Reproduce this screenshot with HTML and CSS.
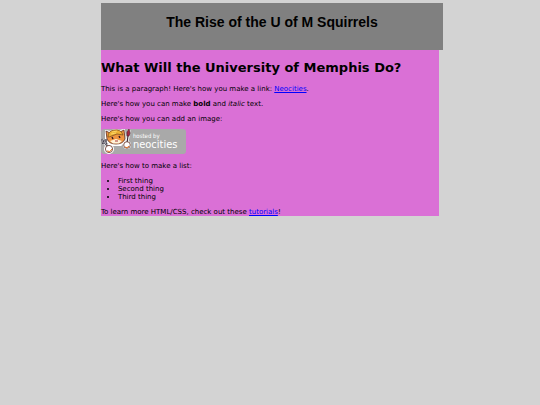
FILE: index.html
```html
<!DOCTYPE html>
<html lang="en">
<head>
    <meta charset="UTF-8">
    <meta name="viewport" content="width=device-width, initial-scale=1.0">
    <title>The Rise of the U of M Squirrels</title>
    <link rel="stylesheet" href="styles.css">
</head>
<body>
    <div class="page">
        <header class="header">The Rise of the U of M Squirrels</header>

        <main class="content">
            <h1>What Will the University of Memphis Do?</h1>

            <p>This is a paragraph! Here's how you make a link: <a href="#neocities">Neocities</a>.</p>

            <p>Here's how you can make <strong>bold</strong> and <em>italic</em> text.</p>

            <p class="caption">Here's how you can add an image:</p>

            <a class="badge" href="#neocities" aria-label="Hosted by Neocities">
                <svg class="cat" viewBox="0 0 31 25" aria-hidden="true">
                    <!-- white outline -->
                    <g fill="#fff" stroke="#fff" stroke-width="2" stroke-linejoin="round" stroke-linecap="round">
                        <path d="M5 2 L9 3 L14 1 L19 2 L23 1 L24 11 L20 16 L10 16 L5 11Z"/>
                        <path d="M28 2 L26 13 M2 12 L7 18" fill="none" stroke-width="3"/>
                        <circle cx="26" cy="16" r="3"/>
                        <circle cx="8" cy="20" r="4"/>
                    </g>
                    <!-- head, ears and cap -->
                    <path d="M5 2 L9 4 L19 3 L23 1 L24 10 Q22 15 15 15 Q8 15 6 10Z" fill="#ef9440" stroke="#592b20" stroke-width=".8"/>
                    <path d="M7 8 Q7 2 13 1 Q20 0 22 6 L16 5 L8 8Z" fill="#eeb035" stroke="#80511e" stroke-width=".8"/>
                    <path d="M11 3 L16 2 M10 5 L15 4" stroke="#ffe779" stroke-width=".7" fill="none"/>
                    <path d="M9 12 L15 10 L21 12 L18 14.5 L12 14.5Z" fill="#fff2d7"/>
                    <path d="M11 8 L12 10 M18 7 L19 9" stroke="#301a24" stroke-width="1.4"/>
                    <path d="M14 12 L17 12" stroke="#a93635"/>
                    <!-- fork -->
                    <path d="M1 10 L2 14 L5 14 L5 10 M3 11 L4 14 L8 19" fill="none" stroke="#38343f" stroke-width="1.8"/>
                    <path d="M1 10 L2 14 L5 14 L5 10 M3 11 L4 14 L8 19" fill="none" stroke="#c8c8d0" stroke-width=".7"/>
                    <!-- brush -->
                    <path d="M26 14 L27 7" stroke="#3d2933" stroke-width="1.2"/>
                    <path d="M26 7 L26 3 L28 0 L29 4 L28 7Z" fill="#a52842" stroke="#5c2030" stroke-width=".7"/>
                    <!-- paws -->
                    <circle cx="26" cy="16" r="3.3" fill="#fff" stroke="#623023" stroke-width=".8"/>
                    <path d="M24 18 Q26 20 28 17" fill="none" stroke="#e57525"/>
                    <circle cx="8" cy="20" r="3.6" fill="#fff" stroke="#623023" stroke-width=".8"/>
                    <path d="M6 22 Q9 24 11 20" fill="none" stroke="#e57525"/>
                </svg>
                <span class="badge-text">
                    <span class="badge-small">hosted by</span>
                    <span class="badge-name">neocities</span>
                </span>
            </a>

            <p>Here's how to make a list:</p>

            <ul>
                <li>First thing</li>
                <li>Second thing</li>
                <li>Third thing</li>
            </ul>

            <p>To learn more HTML/CSS, check out these <a href="#tutorials">tutorials</a>!</p>
        </main>
    </div>
</body>
</html>
```

FILE: styles.css
```css
* {
    box-sizing: border-box;
}

body {
    margin: 3px 0;
    background-color: lightgray;
    color: black;
    font-family: Verdana, "DejaVu Sans", sans-serif;
    font-size: 7px;
    line-height: 8px;
}

.page {
    width: 63%;
    max-width: 800px;
    margin: 0 auto;
    padding-left: 1px;
}

.header {
    margin-right: -3px;
    padding: 11px 0 20px;
    background-color: gray;
    font-family: Arial, "Liberation Sans", sans-serif;
    font-size: 14px;
    font-weight: bold;
    line-height: 16px;
    text-align: center;
}

.content {
    display: flow-root;
    margin-right: 1px;
    background-color: orchid;
}

h1 {
    margin: 9px 0;
    font-size: 13px;
    line-height: 17px;
}

p {
    margin: 7px 0;
}

.content > :last-child {
    margin-bottom: 0;
}

a {
    color: blue;
}

ul {
    margin: 7px 0;
    padding-left: 17px;
}

.caption {
    margin-bottom: 6px;
}

.badge {
    display: flex;
    width: 85px;
    height: 25px;
    margin: 6px 0 8px;
    border-radius: 3px;
    background-color: #a9a9a9;
    color: white;
    text-decoration: none;
}

.cat {
    flex: none;
    width: 31px;
    height: 25px;
    overflow: visible;
}

.badge-text {
    display: flex;
    flex-direction: column;
    padding: 3px 0 0 1px;
    font-family: "DejaVu Sans Condensed", "Open Sans", sans-serif;
    white-space: nowrap;
}

.badge-small {
    font-size: 6px;
    line-height: 7px;
}

.badge-name {
    font-size: 11px;
    line-height: 12px;
}
```
